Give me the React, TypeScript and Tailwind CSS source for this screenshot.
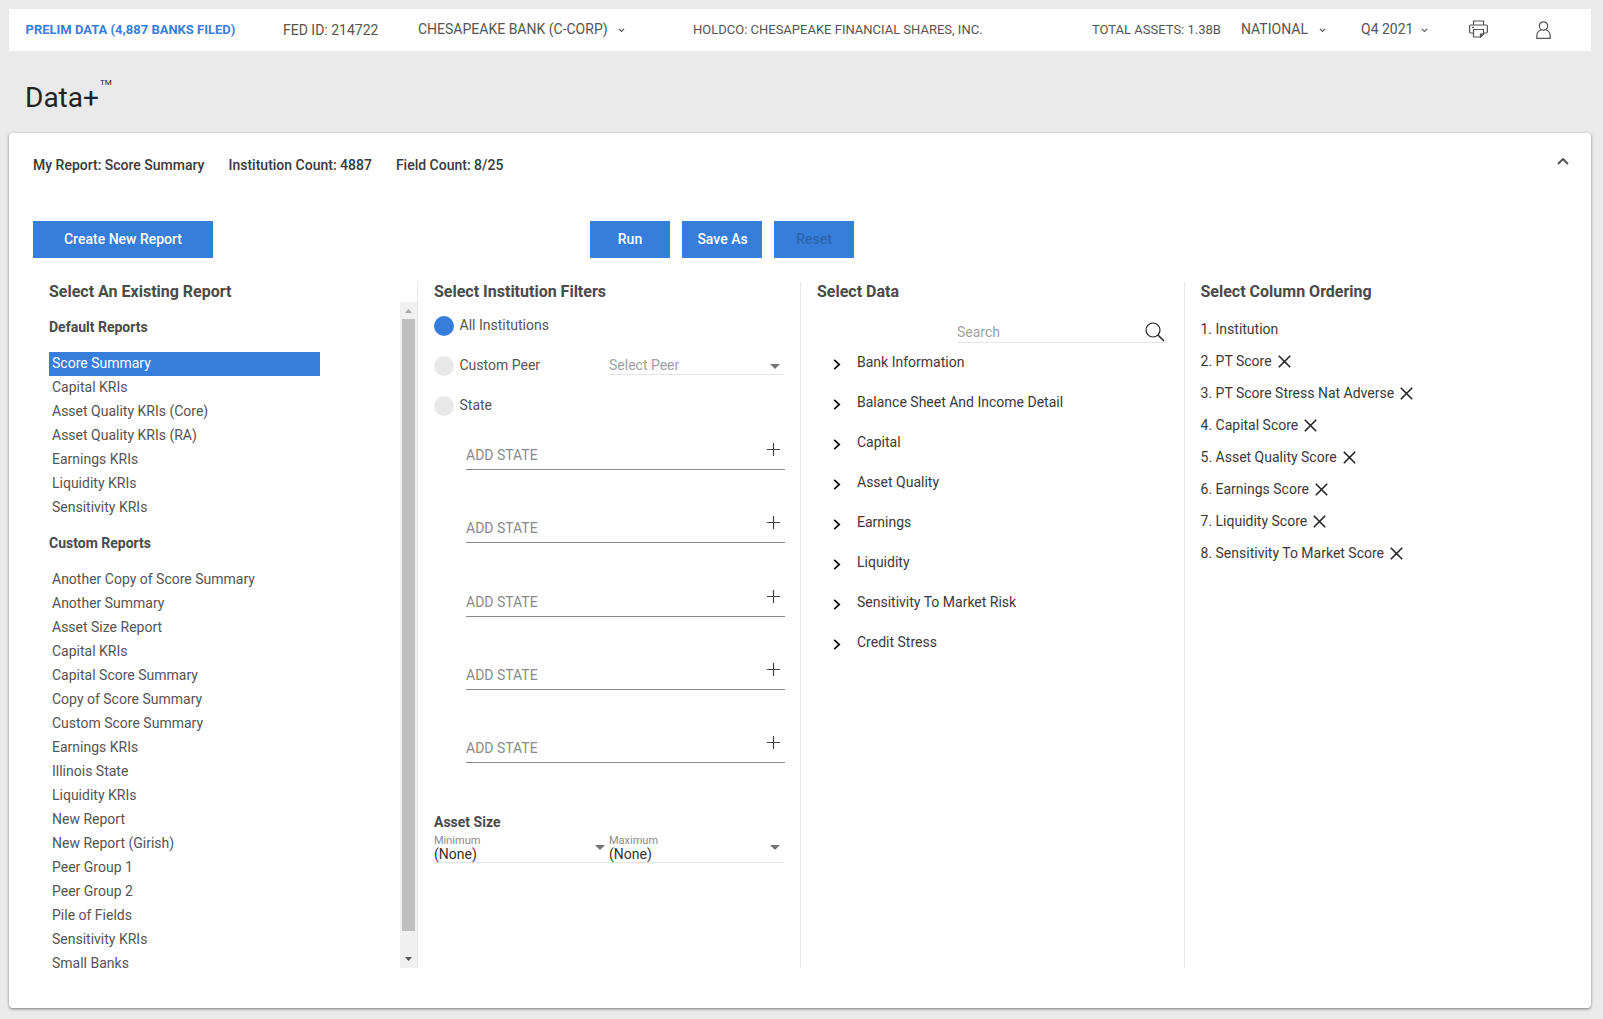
import React from "react";

const defaults = ["Capital KRIs", "Asset Quality KRIs (Core)", "Asset Quality KRIs (RA)", "Earnings KRIs", "Liquidity KRIs", "Sensitivity KRIs"];
const customs = ["Another Copy of Score Summary", "Another Summary", "Asset Size Report", "Capital KRIs", "Capital Score Summary", "Copy of Score Summary", "Custom Score Summary", "Earnings KRIs", "Illinois State", "Liquidity KRIs", "New Report", "New Report (Girish)", "Peer Group 1", "Peer Group 2", "Pile of Fields", "Sensitivity KRIs", "Small Banks"];
const tree = ["Bank Information", "Balance Sheet And Income Detail", "Capital", "Asset Quality", "Earnings", "Liquidity", "Sensitivity To Market Risk", "Credit Stress"];
const order = ["PT Score", "PT Score Stress Nat Adverse", "Capital Score", "Asset Quality Score", "Earnings Score", "Liquidity Score", "Sensitivity To Market Score"];

function SmallChevron({ className = "ml-[10px]" }: { className?: string }) {
  return (
    <svg width="7" height="5" viewBox="0 0 7 5" className={`mt-[2px] shrink-0 ${className}`}>
      <path d="M0.8 0.8 L3.5 3.5 L6.2 0.8" fill="none" stroke="#555" strokeWidth="1.1" />
    </svg>
  );
}

function Caret({ className = "" }: { className?: string }) {
  return (
    <svg width="10" height="5" viewBox="0 0 10 5" className={`shrink-0 ${className}`}>
      <path d="M0 0 H10 L5 5 Z" fill="#757575" />
    </svg>
  );
}

function Heading({ children }: { children: React.ReactNode }) {
  return <h2 className="h-[18px] text-[16px] leading-[20px] font-bold text-[#4a4a4a] whitespace-nowrap">{children}</h2>;
}

function Button({ children, muted, wide }: { children: React.ReactNode; muted?: boolean; wide?: boolean }) {
  return (
    <div className={`h-[37px] flex items-center justify-center bg-[#367ddc] text-[14px] font-medium ${wide ? "w-[180px]" : "w-[80px]"} ${muted ? "text-[#2f65ad]" : "text-white"}`}>
      {children}
    </div>
  );
}

function AddState() {
  return (
    <div className="h-[32px] flex items-start justify-between border-b border-[#8a8a8a]">
      <span className="mt-[9px] text-[14px] leading-4 text-[#8a8a8a]">ADD STATE</span>
      <svg width="13" height="13" viewBox="0 0 13 13" className="mt-[5px] mr-[5px]">
        <path d="M6.5 0 V13 M0 6.5 H13" stroke="#444" strokeWidth="1.2" />
      </svg>
    </div>
  );
}

export default function App() {
  return (
    <div className="w-full h-[1019px] overflow-hidden bg-[#eaeaea] pt-[9px] pl-[9px] pr-[12px] font-['Roboto',sans-serif] text-[14px]">
      {/* top bar */}
      <header className="h-[42px] bg-white flex items-center pl-[16.5px] whitespace-nowrap text-[#555]">
        <span className="w-[257.5px] text-[13px] font-bold text-[#3b7ddd]">PRELIM DATA (4,887 BANKS FILED)</span>
        <span className="w-[135px]">FED ID: 214722</span>
        <span className="w-[275px] flex items-center -mt-[2px]">CHESAPEAKE BANK (C-CORP)<SmallChevron /></span>
        <span className="w-[399px] text-[13px]">HOLDCO: CHESAPEAKE FINANCIAL SHARES, INC.</span>
        <span className="w-[149px] text-[13px]">TOTAL ASSETS: 1.38B</span>
        <span className="w-[120px] flex items-center -mt-[2px]">NATIONAL<SmallChevron className="ml-[11px]" /></span>
        <span className="w-[108px] flex items-center -mt-[2px]">Q4 2021<SmallChevron className="ml-[8px]" /></span>
        <span className="w-[67px] flex items-center -mt-[2px]">
          <svg width="19" height="18" viewBox="0 0 19 18" fill="none" stroke="#555" strokeWidth="1.2">
            <path d="M4.5 5 V1 H14.5 V5" />
            <path d="M4.5 13 H1.8 Q0.6 13 0.6 11.8 V6.2 Q0.6 5 1.8 5 H17.2 Q18.4 5 18.4 6.2 V11.8 Q18.4 13 17.2 13 H14.5" />
            <path d="M4.5 9.5 H14.5 V14 L11.5 17 H4.5 Z" />
            <path d="M11.5 17 V14 H14.5 Z" fill="#555" />
            <path d="M3 7.4 H5" />
          </svg>
        </span>
        <span className="flex items-center -mt-[1px]">
          <svg width="15" height="18" viewBox="0 0 15 18" fill="none" stroke="#555" strokeWidth="1.2">
            <circle cx="7.5" cy="5" r="4.2" />
            <path d="M4.8 9 Q0.8 10.5 0.8 15 V17.4 H14.2 V15 Q14.2 10.5 10.2 9" />
          </svg>
        </span>
      </header>

      {/* title */}
      <div className="h-[82px] pl-[16px] pt-[29px] flex items-start">
        <span className="text-[28px] leading-[36px] text-[#222]">Data+</span>
        <span className="text-[8px] leading-[10px] text-[#222] -mt-[2px] ml-[1px]">TM</span>
      </div>

      {/* card */}
      <main className="h-[875px] bg-white rounded-[4px] shadow-[0_1px_3px_rgba(0,0,0,0.5)]">
        <div className="h-[64px] pl-[24px] flex items-center text-[14px] font-medium text-[#3a3a3a] whitespace-nowrap relative">
          <span className="mr-[24px]">My Report: Score Summary</span>
          <span className="mr-[24px]">Institution Count: 4887</span>
          <span>Field Count: 8/25</span>
          <svg width="12" height="7" viewBox="0 0 12 7" className="absolute right-[22px] top-[25px]">
            <path d="M1 6 L6 1 L11 6" fill="none" stroke="#555" strokeWidth="2" />
          </svg>
        </div>

        <div className="flex pl-[24px] pt-[24px]">
          <Button wide>Create New Report</Button>
          <div className="ml-[377px] flex gap-[12px]">
            <Button>Run</Button>
            <Button><span className="ml-[1px]">Save As</span></Button>
            <Button muted>Reset</Button>
          </div>
        </div>

        <div className="mt-[24px] ml-[24px] h-[686px] flex">
          {/* Column 1 */}
          <section className="w-[384px] pl-[16px] flex">
            <div className="w-[351px] h-full">
              <Heading>Select An Existing Report</Heading>
              <h3 className="mt-[18px] h-[18px] leading-[18px] font-bold text-[#4a4a4a]">Default Reports</h3>
              <div className="mt-[16px] w-[271px] h-[24px] bg-[#367ddc] text-white pl-[3px] leading-[22px]">Score Summary</div>
              {defaults.map((d) => (
                <div key={d} className="h-[24px] leading-[22px] pl-[3px] text-[#555]">{d}</div>
              ))}
              <h3 className="mt-[14px] h-[18px] leading-[18px] font-bold text-[#4a4a4a]">Custom Reports</h3>
              <div className="mt-[15px]">
                {customs.map((d, i) => (
                  <div key={i} className="h-[24px] leading-[24px] pl-[3px] text-[#555]">{d}</div>
                ))}
              </div>
            </div>
            <div className="mt-[20px] w-[17px] h-[666px] bg-[#f0f0f0] flex flex-col items-start">
              <div className="h-[17px] w-full flex items-center justify-center">
                <svg width="7" height="4" viewBox="0 0 7 4"><path d="M0 4 H7 L3.5 0 Z" fill="#a8a8a8" /></svg>
              </div>
              <div className="ml-[2px] w-[13px] h-[612px] bg-[#c0c0c0]" />
              <div className="flex-1 w-full flex items-end justify-center pb-[7px]">
                <svg width="7" height="4" viewBox="0 0 7 4"><path d="M0 0 H7 L3.5 4 Z" fill="#555" /></svg>
              </div>
            </div>
          </section>

          {/* Column 2 */}
          <section className="w-[383px] border-l border-[#e8e8e8] pl-[16px] pr-[15px]">
            <Heading>Select Institution Filters</Heading>
            <div className="mt-[16px] flex flex-col gap-[20px] text-[#555]">
              <div className="h-[20px] flex items-center">
                <span className="w-[20px] h-[20px] rounded-full bg-[#367ddc] mr-[5.5px]" />
                <span className="-mt-[2px]">All Institutions</span>
              </div>
              <div className="h-[20px] flex items-center">
                <span className="w-[20px] h-[20px] rounded-full bg-[#e8e8e8] mr-[5.5px]" />
                <span className="w-[149.5px] -mt-[2px]">Custom Peer</span>
                <div className="w-[175px] h-[20px] border-b border-[#e5e5e5] flex items-center justify-between pr-[4px] -mt-[2px] text-[#a0a0a0]">
                  <span className="mt-[1px]">Select Peer</span>
                  <Caret className="mt-[4px]" />
                </div>
              </div>
              <div className="h-[20px] flex items-center">
                <span className="w-[20px] h-[20px] rounded-full bg-[#e8e8e8] mr-[5.5px]" />
                <span className="-mt-[2px]">State</span>
              </div>
            </div>
            <div className="mt-[22px] pl-[32px] flex flex-col gap-[41.3px]">
              <AddState />
              <AddState />
              <AddState />
              <AddState />
              <AddState />
            </div>
            <h3 className="mt-[50px] h-[18px] leading-[18px] font-bold text-[#4a4a4a]">Asset Size</h3>
            <div className="mt-[2px] w-[350px] h-[30px] border-b border-[#e5e5e5] flex">
              <div className="w-[175px] flex items-center justify-between pr-[4px]">
                <div>
                  <div className="text-[11px] leading-[13px] text-[#8a8a8a]">Minimum</div>
                  <div className="text-[14px] leading-[15px] text-[#333]">(None)</div>
                </div>
                <Caret />
              </div>
              <div className="w-[175px] flex items-center justify-between pr-[4px]">
                <div>
                  <div className="text-[11px] leading-[13px] text-[#8a8a8a]">Maximum</div>
                  <div className="text-[14px] leading-[15px] text-[#333]">(None)</div>
                </div>
                <Caret />
              </div>
            </div>
          </section>

          {/* Column 3 */}
          <section className="w-[384px] border-l border-[#e8e8e8] pl-[16px]">
            <Heading>Select Data</Heading>
            <div className="mt-[22px] ml-[140px] w-[210px] h-[21px] border-b border-[#e5e5e5] flex items-center justify-between text-[#a0a0a0]">
              Search
              <svg width="20" height="20" viewBox="0 0 20 20" fill="none" stroke="#222" strokeWidth="1.2" className="mr-[2px]">
                <circle cx="8" cy="8" r="7" />
                <path d="M13 13 L19 19" strokeWidth="1.5" />
              </svg>
            </div>
            <div className="text-[#3a3a3a]">
              {tree.map((t) => (
                <div key={t} className="h-[40px] pl-[16px] flex items-center whitespace-nowrap">
                  <svg width="8" height="11" viewBox="0 0 8 11" className="mr-[16px] mt-[3px] shrink-0">
                    <path d="M1.2 0.8 L6.2 5.5 L1.2 10.2" fill="none" stroke="#111" strokeWidth="1.8" />
                  </svg>
                  <span className="mb-[2px]">{t}</span>
                </div>
              ))}
            </div>
          </section>

          {/* Column 4 */}
          <section className="flex-1 border-l border-[#e8e8e8] pl-[15.5px]">
            <Heading>Select Column Ordering</Heading>
            <div className="mt-[13px] text-[#3a3a3a]">
              <div className="h-[32px] flex items-center">1. Institution</div>
              {order.map((o, i) => (
                <div key={o} className="h-[32px] flex items-center whitespace-nowrap">
                  {i + 2}. {o}
                  <svg width="13" height="13" viewBox="0 0 13 13" className="ml-[6px] mt-[1px] shrink-0">
                    <path d="M0.8 0.8 L12.2 12.2 M12.2 0.8 L0.8 12.2" stroke="#222" strokeWidth="1.6" />
                  </svg>
                </div>
              ))}
            </div>
          </section>
        </div>
      </main>
    </div>
  );
}
